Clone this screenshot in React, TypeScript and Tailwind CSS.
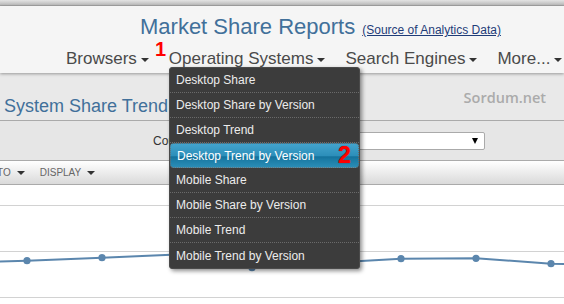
import React from "react";

const navItems = ["Browsers", "Operating Systems", "Search Engines", "More..."];

const menuItems = [
  "Desktop Share",
  "Desktop Share by Version",
  "Desktop Trend",
  "Desktop Trend by Version",
  "Mobile Share",
  "Mobile Share by Version",
  "Mobile Trend",
  "Mobile Trend by Version",
];

// chart points, y relative to top of chart area
const points: [number, number][] = [
  [-48, 78],
  [27, 75.7],
  [102, 72.7],
  [177, 69.5],
  [252, 82.7],
  [326, 78],
  [401, 73.7],
  [476, 73.3],
  [551, 78.7],
  [626, 81],
];

function Caret({ className = "" }: { className?: string }) {
  return (
    <span
      className={`inline-block w-0 h-0 border-l-[4px] border-r-[4px] border-t-[4px] border-l-transparent border-r-transparent border-t-[#333] ${className}`}
    />
  );
}

function TrendChart() {
  const d = points.map(([x, y], i) => `${i === 0 ? "M" : "L"}${x} ${y}`).join(" ");
  return (
    <svg width="564" height="119" className="block">
      {[20, 66, 112].map((y) => (
        <line key={y} x1="0" x2="564" y1={y + 0.5} y2={y + 0.5} stroke="#d2d2d2" strokeWidth="1" />
      ))}
      <path d={d} fill="none" stroke="#5b86ad" strokeWidth="2" />
      {points.map(([x, y]) => (
        <circle key={x} cx={x} cy={y} r="3.6" fill="#5b86ad" />
      ))}
    </svg>
  );
}

export default function App() {
  return (
    <div className="relative w-[564px] h-[304px] overflow-hidden bg-white font-['Liberation_Sans',Arial,sans-serif]">
      {/* top strip */}
      <div className="h-[6px] bg-gradient-to-b from-[#e4e4e4] to-[#bababa] border-b border-[#a4a4a4]" />

      {/* header */}
      <div className="relative z-10 h-[67px] bg-[#f5f5f5] pt-[8px] shadow-[0_1px_3px_rgba(0,0,0,0.35)]">
        <div className="flex items-baseline gap-[7px] pl-[140px] leading-[26px]">
          <span className="text-[22px] text-[#41709a]">Market Share Reports</span>
          <a className="text-[12px] text-[#1f3c78] underline">(Source of Analytics Data)</a>
        </div>
        <div className="relative mt-[6px] flex gap-[20px] pl-[66px] text-[17px] leading-[20px] text-[#4a4a4a]">
          {navItems.map((item) => (
            <span key={item} className="flex items-center gap-[4px] whitespace-nowrap">
              {item}
              <Caret className="translate-y-[1px]" />
            </span>
          ))}
        </div>
      </div>
      <span className="absolute z-30 left-[155px] top-[39px] text-[20px] leading-[20px] font-bold text-[#ff0000]">
        1
      </span>

      {/* title band */}
      <div className="flex justify-between h-[48px] bg-[#e9e9e9] border-b border-[#aaaaaa] pt-[16px] pr-[18px] pl-[4px]">
        <h1 className="mt-[6px] text-[18px] leading-[22px] text-[#41709a] whitespace-nowrap">
          System Share Trend
        </h1>
        <span className="font-['Open_Sans',sans-serif] font-semibold text-[14.5px] leading-[18px] text-[#ababab]">
          Sordum.net
        </span>
      </div>

      {/* filter band */}
      <div className="flex items-center h-[40px] bg-[#e6e6e6] border-b border-[#aaaaaa] pl-[153px] text-[12px] text-[#333]">
        <span>Country:</span>
        <div className="ml-[6px] flex items-center justify-end w-[281px] h-[18px] bg-white border border-[#aaaaaa] rounded-[2px] pr-[6px]">
          <span className="w-0 h-0 border-l-[3.5px] border-r-[3.5px] border-t-[6px] border-l-transparent border-r-transparent border-t-black" />
        </div>
      </div>

      {/* toolbar */}
      <div className="flex items-center h-[24px] bg-gradient-to-b from-white to-[#dadada] border-b border-[#aaaaaa] text-[10px] text-[#666]">
        <span className="flex items-center gap-[6px] ml-[-3px]">
          TO <Caret />
        </span>
        <span className="flex items-center gap-[6px] ml-[15px]">
          DISPLAY <Caret />
        </span>
      </div>

      <TrendChart />

      {/* dropdown menu */}
      <div className="absolute z-20 left-[169px] top-[67px] w-[191px] bg-[#3c3c3c] rounded-[3px] border border-[#4a4a4a] shadow-[2px_2px_4px_rgba(0,0,0,0.45)] text-[12px] text-[#ececec]">
        {menuItems.map((item, i) => {
          const active = item === "Desktop Trend by Version";
          const last = i === menuItems.length - 1;
          return (
            <div
              key={item}
              className={`relative flex items-center h-[25px] pl-[6px] ${
                last ? "" : "border-b border-dotted border-[#6a6a6a]"
              } ${
                active
                  ? "rounded-[4px] border border-[#4fa9cf] bg-[linear-gradient(to_bottom,#43a3cc_0%,#2d8fba_50%,#14729c_56%,#1a7aa4_66%,#2a8db6_100%)] text-white"
                  : ""
              }`}
            >
              {item}
              {active && (
                <span className="absolute left-[167px] top-[0px] text-[23px] leading-[23px] font-bold text-[#ff0000] [text-shadow:0_0_1px_#700]">
                  2
                </span>
              )}
            </div>
          );
        })}
      </div>
    </div>
  );
}
